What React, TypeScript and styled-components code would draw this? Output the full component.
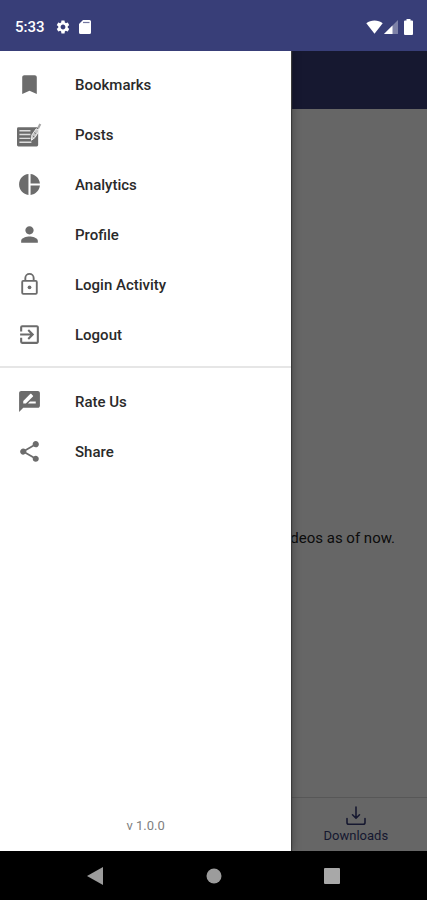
import React from "react";
import styled, { createGlobalStyle } from "styled-components";
import type { IconType } from "react-icons";
import {
  MdBookmark,
  MdExitToApp,
  MdPerson,
  MdPieChart,
  MdRateReview,
  MdSettings,
  MdShare,
} from "react-icons/md";

const GlobalStyle = createGlobalStyle`
  *, *::before, *::after { box-sizing: border-box; }
  body { margin: 0; font-family: Roboto, "Liberation Sans", sans-serif; }
`;

const PlainButton = styled.button`
  border: 0;
  padding: 0;
  background: none;
  color: inherit;
  font: inherit;
  cursor: pointer;
`;

const Screen = styled.div`
  display: flex;
  flex-direction: column;
  min-height: 100vh;
`;

const StatusBar = styled.header`
  display: flex;
  align-items: center;
  justify-content: space-between;
  height: 51px;
  padding: 2px 14px 0 15px;
  background: #383e78;
  color: #fff;
`;

const StatusGroup = styled.div<{ $gap: number }>`
  display: flex;
  align-items: center;
  gap: ${(p) => p.$gap}px;
`;

const Clock = styled.time`
  font-size: 15px;
  font-weight: 500;
  line-height: 18px;
  margin-right: 2px;
`;

const BatterySlot = styled.span`
  display: flex;
  margin-left: 5px;
`;

const Stage = styled.div`
  position: relative;
  display: flex;
  flex: 1;
  flex-direction: column;
  overflow: hidden;
`;

const AppBar = styled.div`
  height: 58px;
  background: #383e78;
`;

const Content = styled.main`
  display: flex;
  flex: 1;
  align-items: center;
  justify-content: flex-end;
  padding: 170px 32px 0;
  background: #fff;
`;

const EmptyText = styled.p`
  margin: 0;
  font-size: 15px;
  line-height: 20px;
  color: #222;
`;

const TabBar = styled.nav`
  display: grid;
  grid-template-columns: repeat(3, 1fr);
  height: 54px;
  border-top: 1px solid #dadada;
  background: #fff;
`;

const Tab = styled(PlainButton)`
  grid-column: 3;
  display: flex;
  flex-direction: column;
  align-items: center;
  padding-top: 4px;
  color: #383e78;
`;

const TabLabel = styled.span`
  font-size: 13px;
  line-height: 16px;
`;

const Scrim = styled.div`
  position: absolute;
  inset: 0;
  background: rgba(0, 0, 0, 0.6);
`;

const Drawer = styled.aside`
  position: absolute;
  inset: 0 auto 0 0;
  display: flex;
  flex-direction: column;
  width: 68.2%;
  padding: 8px 0 15px;
  background: #fff;
  box-shadow: 1px 0 1px #3b3b3b, 2px 0 8px rgba(0, 0, 0, 0.25);
`;

const MenuList = styled.ul`
  margin: 0;
  padding: 0;
  list-style: none;
`;

const MenuButton = styled(PlainButton)`
  display: flex;
  align-items: center;
  gap: 33px;
  width: 100%;
  height: 50px;
  padding: 1px 17px 0;
  text-align: left;
`;

const MenuIcon = styled.span`
  display: flex;
  width: 25px;
  height: 25px;
  color: #6c6c6c;
`;

const MenuLabel = styled.span`
  font-size: 15px;
  font-weight: 500;
  line-height: 20px;
  color: #2a2a2a;
`;

const Divider = styled.hr`
  width: 100%;
  height: 2px;
  margin: 7px 0 8px;
  border: 0;
  background: #e6e6e6;
`;

const Version = styled.p`
  margin: auto 0 0;
  font-size: 13px;
  line-height: 20px;
  text-align: center;
  color: #808080;
`;

const SystemNav = styled.nav`
  display: grid;
  grid-template-columns: repeat(3, 118px);
  justify-content: center;
  height: 49px;
  background: #000;
`;

const SystemButton = styled(PlainButton)`
  display: flex;
  align-items: center;
  justify-content: center;
`;

const LockIcon = () => (
  <svg width="25" height="25" viewBox="0 0 24 24" fill="none" stroke="currentColor" strokeWidth="1.8">
    <rect x="5" y="8.5" width="14" height="12.5" rx="1" />
    <path d="M8 8.500V5.800a4 4 0 0 1 8 0v2.700" />
    <circle cx="12" cy="14.700" r="1.800" fill="currentColor" stroke="none" />
  </svg>
);

const PostsIcon = () => (
  <svg width="26" height="26" viewBox="0 0 26 26" fill="none">
    <rect x="0" y="5" width="22" height="20" rx="1.5" fill="currentColor" />
    <path d="M2.500 8.500h11.500M2.500 12.500h11.500M2.500 16.500h11.500M2.500 20.500h12.500" stroke="#dedede" strokeWidth="1.500" />
    <path d="M15 18.500l.5-5.500 4.500-6.500 3 2-4.200 7z" fill="#c4c4c4" stroke="#f4f4f4" strokeWidth="1" />
    <path d="M21 5.500l2.200-4.500 2 1.200-2.400 4.500z" fill="#a6a6a6" />
    <path d="M18 10.500l1.500 1M16.500 14l1.500 1" stroke="#666" strokeWidth="1" />
  </svg>
);

const WifiIcon = () => (
  <svg width="17" height="14" viewBox="0 0 17 14" fill="#fff">
    <path d="M.3 3.200C4.800-.5 12.200-.5 16.700 3.200L8.500 13.800z" />
  </svg>
);

const SignalIcon = () => (
  <svg width="14" height="14" viewBox="0 0 14 14">
    <path d="M14 0v14H0z" fill="#fff" opacity="0.35" />
    <path d="M8.500 5.500V14H0z" fill="#fff" />
  </svg>
);

const BatteryIcon = () => (
  <svg width="9" height="16" viewBox="0 0 9 16" fill="#fff">
    <path d="M2.500 0h4v1.500H8a1 1 0 0 1 1 1V15a1 1 0 0 1-1 1H1a1 1 0 0 1-1-1V2.500a1 1 0 0 1 1-1h1.500z" />
  </svg>
);

const CardIcon = () => (
  <svg width="12" height="14" viewBox="0 0 12 14">
    <path d="M4 0h6.500A1.500 1.500 0 0 1 12 1.500v11a1.500 1.500 0 0 1-1.500 1.500h-9A1.500 1.500 0 0 1 0 12.500V4z" fill="#fff" />
    <path d="M4 2.500h6.500" stroke="#383e78" strokeWidth="1.200" opacity="0.700" />
  </svg>
);

const DownloadIcon = () => (
  <svg width="22" height="26" viewBox="0 0 22 26" fill="none" stroke="currentColor" strokeWidth="1.600" strokeLinecap="round" strokeLinejoin="round">
    <path d="M11 5v11M7.500 12.800l3.500 3.500 3.500-3.500M2 16.500v4A1.800 1.800 0 0 0 3.800 22.300h14.400a1.800 1.800 0 0 0 1.800-1.800v-4" />
  </svg>
);

type Item = { label: string; icon: IconType | React.FC };

const accountItems: Item[] = [
  { label: "Bookmarks", icon: MdBookmark },
  { label: "Posts", icon: PostsIcon },
  { label: "Analytics", icon: MdPieChart },
  { label: "Profile", icon: MdPerson },
  { label: "Login Activity", icon: LockIcon },
  { label: "Logout", icon: MdExitToApp },
];

const appItems: Item[] = [
  { label: "Rate Us", icon: MdRateReview },
  { label: "Share", icon: MdShare },
];

const Menu = ({ items }: { items: Item[] }) => (
  <MenuList>
    {items.map(({ label, icon }) => {
      const Icon = icon as React.ComponentType<{ size?: number }>;
      return (
        <li key={label}>
          <MenuButton type="button">
            <MenuIcon aria-hidden>
              <Icon size={25} />
            </MenuIcon>
            <MenuLabel>{label}</MenuLabel>
          </MenuButton>
        </li>
      );
    })}
  </MenuList>
);

export default function App() {
  return (
    <>
      <GlobalStyle />
      <Screen>
        <StatusBar>
          <StatusGroup $gap={8}>
            <Clock>5:33</Clock>
            <MdSettings size={16} />
            <CardIcon />
          </StatusGroup>
          <StatusGroup $gap={1}>
            <WifiIcon />
            <SignalIcon />
            <BatterySlot>
              <BatteryIcon />
            </BatterySlot>
          </StatusGroup>
        </StatusBar>
        <Stage>
          <AppBar />
          <Content>
            <EmptyText>There are no videos as of now.</EmptyText>
          </Content>
          <TabBar>
            <Tab type="button">
              <DownloadIcon />
              <TabLabel>Downloads</TabLabel>
            </Tab>
          </TabBar>
          <Scrim />
          <Drawer>
            <Menu items={accountItems} />
            <Divider />
            <Menu items={appItems} />
            <Version>v 1.0.0</Version>
          </Drawer>
        </Stage>
        <SystemNav>
          <SystemButton type="button" aria-label="Back">
            <svg width="18" height="18" viewBox="0 0 18 18">
              <path d="M16 0v18L0 9z" fill="#9c9c9c" />
            </svg>
          </SystemButton>
          <SystemButton type="button" aria-label="Home">
            <svg width="16" height="16" viewBox="0 0 16 16">
              <circle cx="8" cy="8" r="7.500" fill="#9c9c9c" />
            </svg>
          </SystemButton>
          <SystemButton type="button" aria-label="Recent apps">
            <svg width="16" height="16" viewBox="0 0 16 16">
              <rect width="16" height="16" rx="1" fill="#a8a8a8" />
            </svg>
          </SystemButton>
        </SystemNav>
      </Screen>
    </>
  );
}
